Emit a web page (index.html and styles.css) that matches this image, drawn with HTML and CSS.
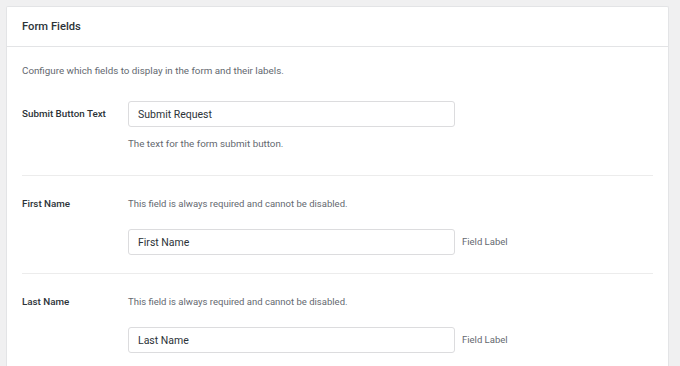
FILE: index.html
```html
<!DOCTYPE html>
<html lang="en">

<head>
    <meta charset="UTF-8">
    <title>Form Fields</title>
    <link rel="stylesheet" href="styles.css">
</head>

<body>

    <div class="card">
        <!-- header -->
        <div class="card-header">Form Fields</div>

        <div class="card-body">
            <p class="intro">Configure which fields to display in the form and their labels.</p>

            <!-- submit button text -->
            <div class="row row-first">
                <div class="row-label">Submit Button Text</div>
                <div class="row-field">
                    <input class="text-input" type="text" value="Submit Request">
                    <p class="help">The text for the form submit button.</p>
                </div>
            </div>

            <!-- first name -->
            <div class="row">
                <div class="row-label">First Name</div>
                <div class="row-field">
                    <p class="desc">This field is always required and cannot be disabled.</p>
                    <div class="input-line">
                        <input class="text-input" type="text" value="First Name">
                        <span class="input-note">Field Label</span>
                    </div>
                </div>
            </div>

            <!-- last name -->
            <div class="row row-last">
                <div class="row-label">Last Name</div>
                <div class="row-field">
                    <p class="desc">This field is always required and cannot be disabled.</p>
                    <div class="input-line">
                        <input class="text-input" type="text" value="Last Name">
                        <span class="input-note">Field Label</span>
                    </div>
                </div>
            </div>
        </div>
    </div>

</body>

</html>
```

FILE: styles.css
```css
* {
    box-sizing: border-box;
}

body {
    margin: 0;
    padding: 6px 11px 0 6px;
    background-color: #f0f0f1;
    font-family: Roboto, "Noto Sans", "Liberation Sans", sans-serif;
    font-size: 9.8px;
    line-height: 14px;
    color: #1e1e1e;
    height: 366px;
    overflow: hidden;
}

p {
    margin: 0;
}

.card {
    background-color: #fff;
    border: 1px solid #e3e4e6;
    border-bottom: 0;
    border-radius: 2px 2px 0 0;
}

.card-header {
    height: 40px;
    line-height: 39px;
    padding: 0 15px;
    font-size: 11.2px;
    font-weight: 500;
    color: #2c3338;
    border-bottom: 1px solid #e3e4e6;
}

.card-body {
    padding: 17px 15px 0 15px;
}

.intro {
    color: #646970;
    margin-bottom: 23px;
}

.row {
    display: grid;
    grid-template-columns: 106px 1fr;
    padding: 21px 0 18px;
    border-bottom: 1px solid #ececec;
}

.row-first {
    padding-top: 0;
    padding-bottom: 24px;
}

.row-last {
    border-bottom: 0;
}

.row-label {
    font-weight: 500;
    color: #2c3338;
}

.row-first .row-label {
    line-height: 26px;
}

.row-field {
    display: flex;
    flex-direction: column;
}

.text-input {
    width: 327px;
    height: 26px;
    padding: 0 9px;
    border: 1px solid #dcdcde;
    border-radius: 3px;
    font-family: inherit;
    font-size: 10.5px;
    color: #2c3338;
    background: #fff;
    outline: none;
}

.help {
    color: #646970;
    margin-top: 10px;
}

.desc {
    color: #646970;
    font-size: 9.5px;
    margin-bottom: 18px;
}

.input-line {
    display: flex;
    align-items: center;
    gap: 7px;
}

.input-note {
    color: #646970;
    font-size: 9.5px;
}
```
